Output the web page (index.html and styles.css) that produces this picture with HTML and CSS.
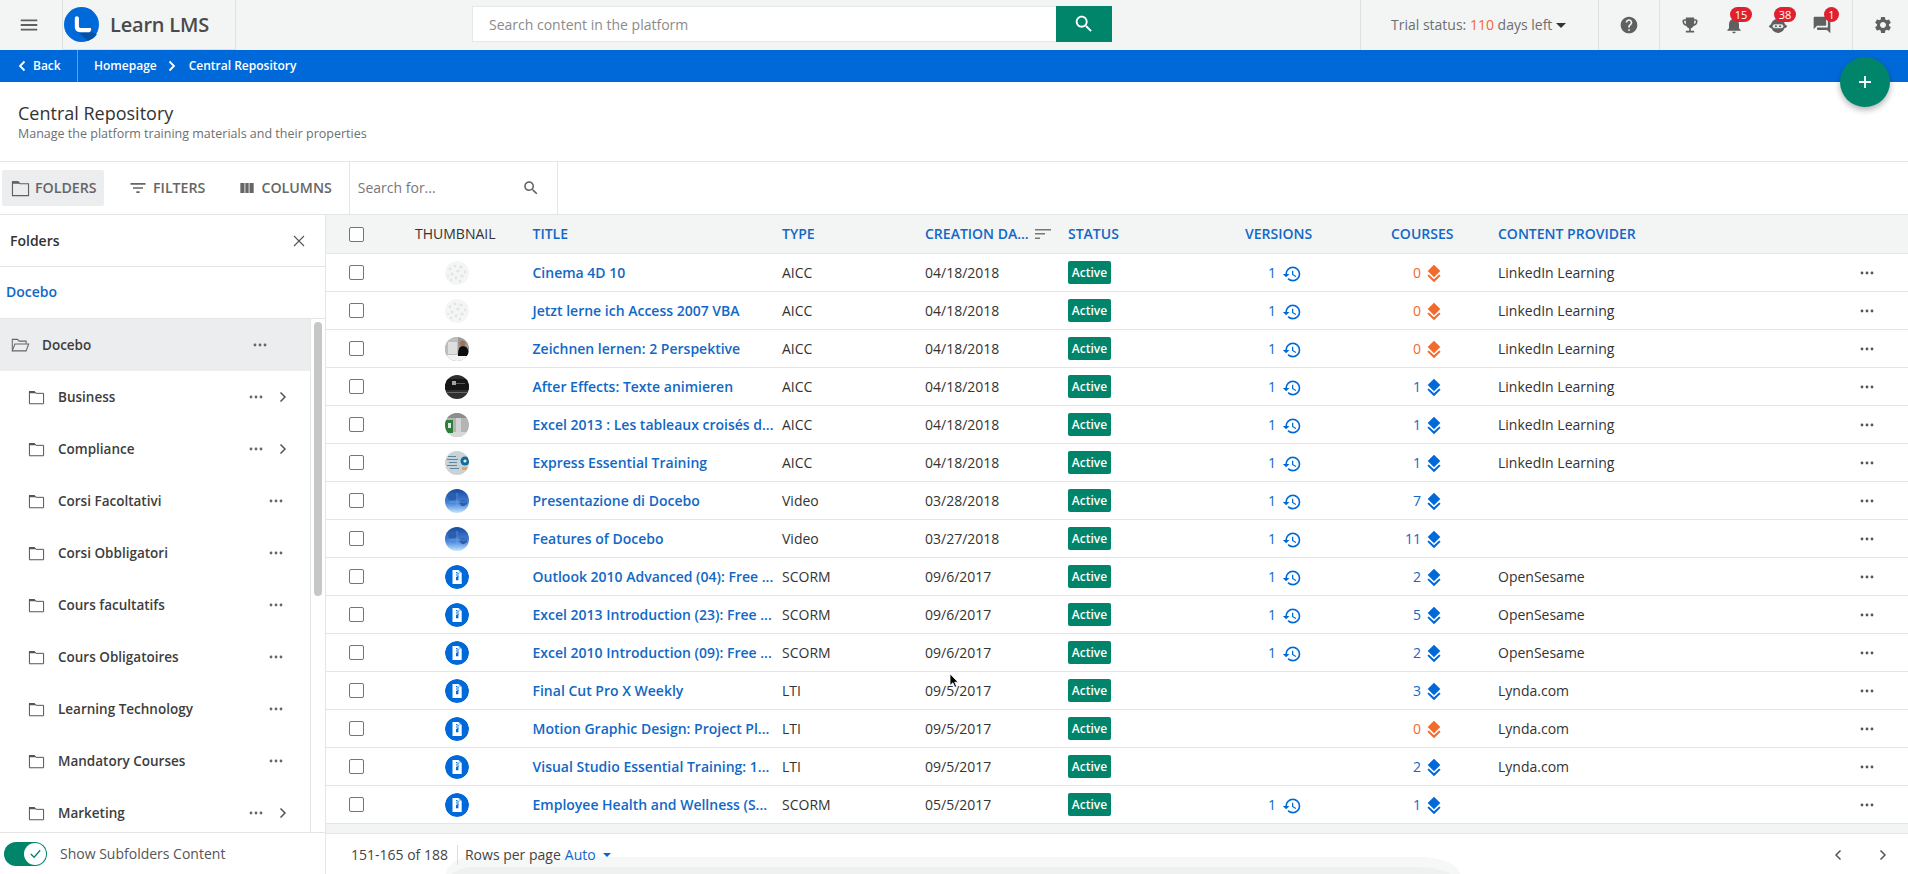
FILE: index.html
```html
<!DOCTYPE html>
<html lang="en">
<head>
<meta charset="utf-8">
<title>Central Repository - Learn LMS</title>
<link rel="stylesheet" href="styles.css">
</head>
<body>
<svg class="defs" aria-hidden="true">
  <symbol id="i-menu" viewBox="0 0 24 24"><path d="M3 18h18v-2H3v2zm0-5h18v-2H3v2zm0-7v2h18V6H3z"/></symbol>
  <symbol id="i-search" viewBox="0 0 24 24"><path d="M15.5 14h-.79l-.28-.27C15.41 12.59 16 11.11 16 9.5 16 5.91 13.09 3 9.5 3S3 5.91 3 9.5 5.91 16 9.5 16c1.61 0 3.09-.59 4.23-1.57l.27.28v.79l5 4.99L20.49 19l-4.99-5zm-6 0C7.01 14 5 11.99 5 9.5S7.01 5 9.5 5 14 7.01 14 9.5 11.99 14 9.5 14z"/></symbol>
  <symbol id="i-help" viewBox="0 0 24 24"><path d="M12 2C6.48 2 2 6.48 2 12s4.48 10 10 10 10-4.48 10-10S17.52 2 12 2zm1 17h-2v-2h2v2zm2.07-7.75l-.9.92C13.45 12.9 13 13.5 13 15h-2v-.5c0-1.1.45-2.1 1.17-2.83l1.24-1.26c.37-.36.59-.86.59-1.41 0-1.1-.9-2-2-2s-2 .9-2 2H8c0-2.21 1.79-4 4-4s4 1.79 4 4c0 .88-.36 1.68-.93 2.25z"/></symbol>
  <symbol id="i-trophy" viewBox="0 0 24 24"><path d="M19 5h-2V3H7v2H5c-1.1 0-2 .9-2 2v1c0 2.55 1.92 4.63 4.39 4.94.63 1.5 1.98 2.63 3.61 2.96V19H7v2h10v-2h-4v-3.1c1.63-.33 2.98-1.46 3.61-2.96C19.08 12.63 21 10.55 21 8V7c0-1.1-.9-2-2-2zM5 8V7h2v3.82C5.84 10.4 5 9.3 5 8zm14 0c0 1.3-.84 2.4-2 2.82V7h2v1z"/></symbol>
  <symbol id="i-bell" viewBox="0 0 24 24"><path d="M12 22c1.1 0 2-.9 2-2h-4c0 1.1.89 2 2 2zm6-6v-5c0-3.07-1.64-5.64-4.5-6.32V4c0-.83-.67-1.5-1.5-1.5s-1.5.67-1.5 1.5v.68C7.63 5.36 6 7.92 6 11v5l-2 2v1h16v-1l-2-2z"/></symbol>
  <symbol id="i-robot" viewBox="0 0 24 24"><circle cx="12" cy="13" r="8.500"/><rect x="1.500" y="11.500" width="21" height="4" rx="2"/><rect x="5.500" y="11" width="13" height="5" rx="2.500" fill="#e4e5e5"/><circle cx="9.500" cy="13.500" r="1.200"/><circle cx="14.500" cy="13.500" r="1.200"/></symbol>
  <symbol id="i-forum" viewBox="0 0 24 24"><path d="M21 6h-2v9H6v2c0 .55.45 1 1 1h11l4 4V7c0-.55-.45-1-1-1zm-4 6V3c0-.55-.45-1-1-1H3c-.55 0-1 .45-1 1v14l4-4h10c.55 0 1-.45 1-1z"/></symbol>
  <symbol id="i-gear" viewBox="0 0 24 24"><path d="M19.14 12.94c.04-.3.06-.61.06-.94 0-.32-.02-.64-.07-.94l2.03-1.58a.49.49 0 0 0 .12-.61l-1.92-3.32a.488.488 0 0 0-.59-.22l-2.39.96c-.5-.38-1.03-.7-1.62-.94l-.36-2.54a.484.484 0 0 0-.48-.41h-3.84c-.24 0-.43.17-.47.41l-.36 2.54c-.59.24-1.13.57-1.62.94l-2.39-.96c-.22-.08-.47 0-.59.22L2.74 8.87c-.12.21-.08.47.12.61l2.03 1.58c-.05.3-.09.63-.09.94s.02.64.07.94l-2.03 1.58a.49.49 0 0 0-.12.61l1.92 3.32c.12.22.37.29.59.22l2.39-.96c.5.38 1.03.7 1.62.94l.36 2.54c.05.24.24.41.48.41h3.84c.24 0 .44-.17.47-.41l.36-2.54c.59-.24 1.13-.56 1.62-.94l2.39.96c.22.08.47 0 .59-.22l1.92-3.32c.12-.22.07-.47-.12-.61l-2.01-1.58zM12 15.6c-1.98 0-3.6-1.62-3.6-3.6s1.62-3.6 3.6-3.6 3.6 1.62 3.6 3.6-1.62 3.6-3.6 3.6z"/></symbol>
  <symbol id="i-history" viewBox="0 0 24 24"><path d="M13 3a9 9 0 0 0-9 9H1l3.89 3.89.07.14L9 12H6c0-3.87 3.13-7 7-7s7 3.13 7 7-3.13 7-7 7c-1.93 0-3.68-.79-4.94-2.06l-1.42 1.42A8.954 8.954 0 0 0 13 21a9 9 0 0 0 0-18zm-1 5v5l4.28 2.54.72-1.21-3.5-2.08V8H12z"/></symbol>
  <symbol id="i-layers" viewBox="0 0 24 24"><path d="M12 1l8 7.800L12 16.600 4 8.800z"/><path d="M12 19.200l-6.600-6-1.700 1.600L12 23l8.300-8.200-1.700-1.600z"/></symbol>
  <symbol id="i-filter" viewBox="0 0 24 24"><path d="M10 18h4v-2h-4v2zM3 6v2h18V6H3zm3 7h12v-2H6v2z"/></symbol>
  <symbol id="i-sort" viewBox="0 0 16 12"><path d="M0 1h16v1.500H0zM0 5h10v1.500H0zM0 9.500h5V11H0z"/></symbol>
  <symbol id="i-columns" viewBox="0 0 24 24"><path d="M10 18h4V6h-4v12zm-6 0h5V6H4v12zM15 6v12h5V6h-5z"/></symbol>
  <symbol id="i-folder" viewBox="0 0 20 18"><path d="M1.500 2h6l2 2h9v12.500h-17z" fill="none" stroke="currentColor" stroke-width="1.200"/><path d="M1 1.200h6.400L9.600 4H1z"/></symbol>
  <symbol id="i-folder-open" viewBox="0 0 22 18"><path d="M1.500 15.500V2.500h6l2 2h8v3" fill="none" stroke="currentColor" stroke-width="1.200"/><path d="M1.500 15.800l3-8h16l-3 8z" fill="none" stroke="currentColor" stroke-width="1.200"/></symbol>
  <symbol id="i-more" viewBox="0 0 14 4"><circle cx="2" cy="2" r="1.400"/><circle cx="7" cy="2" r="1.400"/><circle cx="12" cy="2" r="1.400"/></symbol>
  <symbol id="t-noise" viewBox="0 0 24 24"><rect width="24" height="24" fill="#f4f5f5"/><g fill="#e2e4e4"><circle cx="5" cy="8" r="1.400"/><circle cx="10" cy="5" r="1.300"/><circle cx="16" cy="6" r="1.500"/><circle cx="20" cy="11" r="1.300"/><circle cx="13" cy="10" r="1.600"/><circle cx="7" cy="13" r="1.500"/><circle cx="3" cy="15" r="1.100"/><circle cx="17" cy="15" r="1.600"/><circle cx="11" cy="17" r="1.400"/><circle cx="6" cy="19" r="1.200"/><circle cx="15" cy="20" r="1.200"/></g></symbol>
  <symbol id="t-person" viewBox="0 0 24 24"><rect width="24" height="24" fill="#9a9a9a"/><rect x="0" y="0" width="13" height="24" fill="#bdbdbd"/><rect x="3" y="5" width="9" height="12" fill="#dedede"/><rect y="18" width="24" height="6" fill="#f2f2f2"/><path d="M13 19c0-6 1-10 5-10s6 4 6 10z" fill="#0c0c0c"/><circle cx="17.500" cy="6.500" r="2.800" fill="#a5705a"/></symbol>
  <symbol id="t-dark" viewBox="0 0 24 24"><rect width="24" height="24" fill="#2f2f2f"/><rect x="0" y="4" width="24" height="11" fill="#161616"/><rect x="7" y="6" width="4" height="4" fill="#a5a5a5"/><rect x="11" y="8" width="9" height="1" fill="#5a5a5a"/><rect y="17" width="24" height="1" fill="#696969"/></symbol>
  <symbol id="t-excel" viewBox="0 0 24 24"><rect width="24" height="24" fill="#b4b4b4"/><rect y="0" width="24" height="5" fill="#8d8d8d"/><rect y="19" width="24" height="5" fill="#d8d8d8"/><rect x="0" y="7" width="8" height="13" fill="#2f7d3b"/><rect x="3" y="10" width="3" height="5" fill="#e6e6e6"/><rect x="11" y="5" width="5" height="14" fill="#d4d4d4"/></symbol>
  <symbol id="t-code" viewBox="0 0 24 24"><rect width="24" height="24" fill="#c9d2d6"/><g fill="#5c86a8"><rect x="3" y="5" width="8" height="1"/><rect x="2" y="8" width="11" height="1"/><rect x="4" y="11" width="8" height="1"/><rect x="2" y="14" width="10" height="1"/><rect x="5" y="17" width="9" height="1"/></g><circle cx="20" cy="10" r="4.500" fill="#0f6d9a"/><circle cx="20" cy="10" r="1.600" fill="#e8eef0"/><rect x="17" y="16" width="5" height="3" fill="#e2a65c"/></symbol>
  <symbol id="t-globe" viewBox="0 0 24 24"><defs><linearGradient id="g-globe" x1="0" y1="0" x2="0" y2="1"><stop offset="0" stop-color="#164a9c"/><stop offset=".6" stop-color="#4a86dc"/><stop offset="1" stop-color="#c6e8ff"/></linearGradient></defs><rect width="24" height="24" fill="url(#g-globe)"/><path d="M3 8c3-3 7-3 9-1s-1 4-4 4-4 2-5-3zM15 12c3-2 6-1 7 1s-3 5-5 4-3-3-2-5z" fill="#2a5fb0"/><path d="M12 4v18M4 13h17" stroke="#8ab4ea" stroke-width=".5" fill="none"/></symbol>
  <symbol id="t-zip" viewBox="0 0 24 24"><circle cx="12" cy="12" r="12" fill="#0069d9"/><path d="M7.500 5h6.200l3 3v11h-9.200z" fill="#fff"/><path d="M13.500 5v3.200h3.200z" fill="#a9ccf2"/><path d="M11 7h1.400v1.200H11zm1.400 1.200h1.400v1.200h-1.400zM11 9.400h1.400v1.200H11zm1.400 1.200h1.400v1.200h-1.400zM11 11.800h2.400v3.400H11z" fill="#0069d9"/></symbol>
</svg>

<div class="app">
  <header class="topbar">
    <button class="menu-btn" aria-label="Menu"><svg class="ic-22"><use href="#i-menu"/></svg></button>
    <div class="brand">
      <svg class="logo" viewBox="0 0 34 34" aria-hidden="true">
        <circle cx="17" cy="17" r="17" fill="#0069d9"/>
        <path d="M14 24.500h12.500L32 26.500A17 17 0 0 1 23 33z" fill="#0352a8"/>
        <path d="M10.500 11c0-1.200.9-2 2-2s2 .8 2 2v7.500c0 1.200.8 2 2 2H24c1.300 0 2.400-.6 2.400 1 0 1.900-1 3-3 3h-7.900c-3 0-5-2-5-5z" fill="#fff"/>
      </svg>
      <span class="brand-name">Learn LMS</span>
    </div>
    <div class="global-search">
      <input class="global-input" type="text" placeholder="Search content in the platform">
      <button class="global-btn" aria-label="Search"><svg class="ic-22"><use href="#i-search"/></svg></button>
    </div>
    <div class="trial"><span>Trial status: <span class="trial-days">110</span> days left</span><i class="caret"></i></div>
    <div class="tb-cell tb-help"><svg class="ic-20"><use href="#i-help"/></svg></div>
    <div class="tb-cell tb-notif">
      <span class="nb"><svg class="ic-20"><use href="#i-trophy"/></svg></span>
      <span class="nb"><svg class="ic-20"><use href="#i-bell"/></svg><b class="count">15</b></span>
      <span class="nb"><svg class="ic-20"><use href="#i-robot"/></svg><b class="count">38</b></span>
      <span class="nb"><svg class="ic-20"><use href="#i-forum"/></svg><b class="count count-one">1</b></span>
    </div>
    <div class="tb-cell tb-gear"><svg class="ic-20"><use href="#i-gear"/></svg></div>
  </header>

  <nav class="crumbs">
    <a class="back"><svg class="chev-w" viewBox="0 0 8 12"><path d="M6.500 1.500L2 6l4.500 4.500"/></svg>Back</a>
    <a class="crumb">Homepage</a>
    <svg class="chev-w chev-sep" viewBox="0 0 8 12"><path d="M1.500 1.500L6 6l-4.500 4.500"/></svg>
    <span class="crumb">Central Repository</span>
  </nav>

  <section class="pagehead">
    <h1>Central Repository</h1>
    <p>Manage the platform training materials and their properties</p>
  </section>

  <section class="toolbar">
    <button class="tool tool-on"><svg class="ic-folder"><use href="#i-folder"/></svg>FOLDERS</button>
    <button class="tool tool-filter"><svg class="ic-20"><use href="#i-filter"/></svg>FILTERS</button>
    <button class="tool tool-col"><svg class="ic-20"><use href="#i-columns"/></svg>COLUMNS</button>
    <div class="tool-search"><input type="text" placeholder="Search for..."><svg class="ic-18"><use href="#i-search"/></svg></div>
  </section>

  <main class="content">
    <aside class="side">
      <div class="side-head"><span>Folders</span>
        <svg class="side-x" viewBox="0 0 12 12"><path d="M1 1l10 10M11 1L1 11"/></svg></div>
      <div class="side-crumb">Docebo</div>
      <div class="side-body">
        <div class="side-list">
          <div class="folder folder-root"><svg class="f-open"><use href="#i-folder-open"/></svg><span class="f-name">Docebo</span><svg class="dots"><use href="#i-more"/></svg></div>
          <div class="folder"><svg class="f-ic"><use href="#i-folder"/></svg><span class="f-name">Business</span><svg class="dots"><use href="#i-more"/></svg><svg class="chev-g" viewBox="0 0 8 12"><path d="M1.500 1.500L6 6l-4.500 4.500"/></svg></div>
          <div class="folder"><svg class="f-ic"><use href="#i-folder"/></svg><span class="f-name">Compliance</span><svg class="dots"><use href="#i-more"/></svg><svg class="chev-g" viewBox="0 0 8 12"><path d="M1.500 1.500L6 6l-4.500 4.500"/></svg></div>
          <div class="folder folder-plain"><svg class="f-ic"><use href="#i-folder"/></svg><span class="f-name">Corsi Facoltativi</span><svg class="dots"><use href="#i-more"/></svg></div>
          <div class="folder folder-plain"><svg class="f-ic"><use href="#i-folder"/></svg><span class="f-name">Corsi Obbligatori</span><svg class="dots"><use href="#i-more"/></svg></div>
          <div class="folder folder-plain"><svg class="f-ic"><use href="#i-folder"/></svg><span class="f-name">Cours facultatifs</span><svg class="dots"><use href="#i-more"/></svg></div>
          <div class="folder folder-plain"><svg class="f-ic"><use href="#i-folder"/></svg><span class="f-name">Cours Obligatoires</span><svg class="dots"><use href="#i-more"/></svg></div>
          <div class="folder folder-plain"><svg class="f-ic"><use href="#i-folder"/></svg><span class="f-name">Learning Technology</span><svg class="dots"><use href="#i-more"/></svg></div>
          <div class="folder folder-plain"><svg class="f-ic"><use href="#i-folder"/></svg><span class="f-name">Mandatory Courses</span><svg class="dots"><use href="#i-more"/></svg></div>
          <div class="folder"><svg class="f-ic"><use href="#i-folder"/></svg><span class="f-name">Marketing</span><svg class="dots"><use href="#i-more"/></svg><svg class="chev-g" viewBox="0 0 8 12"><path d="M1.500 1.500L6 6l-4.500 4.500"/></svg></div>
        </div>
        <div class="side-track"><div class="side-thumb"></div></div>
      </div>
      <div class="side-foot">
        <span class="toggle"><span class="knob"><svg viewBox="0 0 16 16"><path d="M3 8.500l3.500 3.500L13 4.500"/></svg></span></span>
        <span class="side-foot-label">Show Subfolders Content</span>
      </div>
    </aside>

    <section class="grid">
      <div class="row row-head">
        <span class="c-check"><i class="box"></i></span>
        <span class="h-plain">THUMBNAIL</span>
        <span>TITLE</span>
        <span>TYPE</span>
        <span class="h-sort">CREATION DA...<svg class="sort"><use href="#i-sort"/></svg></span>
        <span>STATUS</span>
        <span>VERSIONS</span>
        <span>COURSES</span>
        <span>CONTENT PROVIDER</span>
        <span></span>
      </div>

      <div class="row"><span class="c-check"><i class="box"></i></span><span class="c-thumb"><svg><use href="#t-noise"/></svg></span><a class="c-title">Cinema 4D 10</a><span>AICC</span><span>04/18/2018</span><span class="c-status"><b class="active">Active</b></span><span class="c-ver">1<svg><use href="#i-history"/></svg></span><span class="c-crs zero">0<svg><use href="#i-layers"/></svg></span><span>LinkedIn Learning</span><svg class="row-more"><use href="#i-more"/></svg></div>
      <div class="row"><span class="c-check"><i class="box"></i></span><span class="c-thumb"><svg><use href="#t-noise"/></svg></span><a class="c-title">Jetzt lerne ich Access 2007 VBA</a><span>AICC</span><span>04/18/2018</span><span class="c-status"><b class="active">Active</b></span><span class="c-ver">1<svg><use href="#i-history"/></svg></span><span class="c-crs zero">0<svg><use href="#i-layers"/></svg></span><span>LinkedIn Learning</span><svg class="row-more"><use href="#i-more"/></svg></div>
      <div class="row"><span class="c-check"><i class="box"></i></span><span class="c-thumb"><svg><use href="#t-person"/></svg></span><a class="c-title">Zeichnen lernen: 2 Perspektive</a><span>AICC</span><span>04/18/2018</span><span class="c-status"><b class="active">Active</b></span><span class="c-ver">1<svg><use href="#i-history"/></svg></span><span class="c-crs zero">0<svg><use href="#i-layers"/></svg></span><span>LinkedIn Learning</span><svg class="row-more"><use href="#i-more"/></svg></div>
      <div class="row"><span class="c-check"><i class="box"></i></span><span class="c-thumb"><svg><use href="#t-dark"/></svg></span><a class="c-title">After Effects: Texte animieren</a><span>AICC</span><span>04/18/2018</span><span class="c-status"><b class="active">Active</b></span><span class="c-ver">1<svg><use href="#i-history"/></svg></span><span class="c-crs">1<svg><use href="#i-layers"/></svg></span><span>LinkedIn Learning</span><svg class="row-more"><use href="#i-more"/></svg></div>
      <div class="row"><span class="c-check"><i class="box"></i></span><span class="c-thumb"><svg><use href="#t-excel"/></svg></span><a class="c-title">Excel 2013 : Les tableaux croisés d...</a><span>AICC</span><span>04/18/2018</span><span class="c-status"><b class="active">Active</b></span><span class="c-ver">1<svg><use href="#i-history"/></svg></span><span class="c-crs">1<svg><use href="#i-layers"/></svg></span><span>LinkedIn Learning</span><svg class="row-more"><use href="#i-more"/></svg></div>
      <div class="row"><span class="c-check"><i class="box"></i></span><span class="c-thumb"><svg><use href="#t-code"/></svg></span><a class="c-title">Express Essential Training</a><span>AICC</span><span>04/18/2018</span><span class="c-status"><b class="active">Active</b></span><span class="c-ver">1<svg><use href="#i-history"/></svg></span><span class="c-crs">1<svg><use href="#i-layers"/></svg></span><span>LinkedIn Learning</span><svg class="row-more"><use href="#i-more"/></svg></div>
      <div class="row"><span class="c-check"><i class="box"></i></span><span class="c-thumb"><svg><use href="#t-globe"/></svg></span><a class="c-title">Presentazione di Docebo</a><span>Video</span><span>03/28/2018</span><span class="c-status"><b class="active">Active</b></span><span class="c-ver">1<svg><use href="#i-history"/></svg></span><span class="c-crs">7<svg><use href="#i-layers"/></svg></span><span></span><svg class="row-more"><use href="#i-more"/></svg></div>
      <div class="row"><span class="c-check"><i class="box"></i></span><span class="c-thumb"><svg><use href="#t-globe"/></svg></span><a class="c-title">Features of Docebo</a><span>Video</span><span>03/27/2018</span><span class="c-status"><b class="active">Active</b></span><span class="c-ver">1<svg><use href="#i-history"/></svg></span><span class="c-crs">11<svg><use href="#i-layers"/></svg></span><span></span><svg class="row-more"><use href="#i-more"/></svg></div>
      <div class="row"><span class="c-check"><i class="box"></i></span><span class="c-thumb"><svg><use href="#t-zip"/></svg></span><a class="c-title">Outlook 2010 Advanced (04): Free ...</a><span>SCORM</span><span>09/6/2017</span><span class="c-status"><b class="active">Active</b></span><span class="c-ver">1<svg><use href="#i-history"/></svg></span><span class="c-crs">2<svg><use href="#i-layers"/></svg></span><span>OpenSesame</span><svg class="row-more"><use href="#i-more"/></svg></div>
      <div class="row"><span class="c-check"><i class="box"></i></span><span class="c-thumb"><svg><use href="#t-zip"/></svg></span><a class="c-title">Excel 2013 Introduction (23): Free ...</a><span>SCORM</span><span>09/6/2017</span><span class="c-status"><b class="active">Active</b></span><span class="c-ver">1<svg><use href="#i-history"/></svg></span><span class="c-crs">5<svg><use href="#i-layers"/></svg></span><span>OpenSesame</span><svg class="row-more"><use href="#i-more"/></svg></div>
      <div class="row"><span class="c-check"><i class="box"></i></span><span class="c-thumb"><svg><use href="#t-zip"/></svg></span><a class="c-title">Excel 2010 Introduction (09): Free ...</a><span>SCORM</span><span>09/6/2017</span><span class="c-status"><b class="active">Active</b></span><span class="c-ver">1<svg><use href="#i-history"/></svg></span><span class="c-crs">2<svg><use href="#i-layers"/></svg></span><span>OpenSesame</span><svg class="row-more"><use href="#i-more"/></svg></div>
      <div class="row"><span class="c-check"><i class="box"></i></span><span class="c-thumb"><svg><use href="#t-zip"/></svg></span><a class="c-title">Final Cut Pro X Weekly</a><span>LTI</span><span>09/5/2017</span><span class="c-status"><b class="active">Active</b></span><span></span><span class="c-crs">3<svg><use href="#i-layers"/></svg></span><span>Lynda.com</span><svg class="row-more"><use href="#i-more"/></svg></div>
      <div class="row"><span class="c-check"><i class="box"></i></span><span class="c-thumb"><svg><use href="#t-zip"/></svg></span><a class="c-title">Motion Graphic Design: Project Pl...</a><span>LTI</span><span>09/5/2017</span><span class="c-status"><b class="active">Active</b></span><span></span><span class="c-crs zero">0<svg><use href="#i-layers"/></svg></span><span>Lynda.com</span><svg class="row-more"><use href="#i-more"/></svg></div>
      <div class="row"><span class="c-check"><i class="box"></i></span><span class="c-thumb"><svg><use href="#t-zip"/></svg></span><a class="c-title">Visual Studio Essential Training: 1...</a><span>LTI</span><span>09/5/2017</span><span class="c-status"><b class="active">Active</b></span><span></span><span class="c-crs">2<svg><use href="#i-layers"/></svg></span><span>Lynda.com</span><svg class="row-more"><use href="#i-more"/></svg></div>
      <div class="row"><span class="c-check"><i class="box"></i></span><span class="c-thumb"><svg><use href="#t-zip"/></svg></span><a class="c-title">Employee Health and Wellness (S...</a><span>SCORM</span><span>05/5/2017</span><span class="c-status"><b class="active">Active</b></span><span class="c-ver">1<svg><use href="#i-history"/></svg></span><span class="c-crs">1<svg><use href="#i-layers"/></svg></span><span></span><svg class="row-more"><use href="#i-more"/></svg></div>

      <div class="grid-strip"></div>
      <footer class="pager">
        <div class="ghost"></div>
        <span class="range">151-165 of 188</span>
        <span class="rpp">Rows per page</span>
        <span class="auto">Auto</span><i class="caret caret-blue"></i>
        <span class="pager-nav">
          <svg class="chev-g" viewBox="0 0 8 12"><path d="M6.500 1.500L2 6l4.500 4.500"/></svg>
          <svg class="chev-g" viewBox="0 0 8 12"><path d="M1.500 1.500L6 6l-4.500 4.500"/></svg>
        </span>
      </footer>
    </section>
  </main>
</div>

<button class="fab" aria-label="Add"><svg viewBox="0 0 14 14"><path d="M7 1v12M1 7h12"/></svg></button>
<svg class="cursor" viewBox="0 0 12 18" aria-hidden="true"><path d="M1 1v13l3.200-3 2.200 5 2-.9-2.200-4.800H10z" fill="#000" stroke="#fff" stroke-width=".8"/></svg>
</body>
</html>
```

FILE: styles.css
```css
* { box-sizing: border-box; }
html, body { margin: 0; height: 100%; overflow: hidden; }
body { font: 400 14px/1.2 "Open Sans", "Liberation Sans", sans-serif; color: #333; background: #fff; }
button { font: inherit; border: 0; background: none; padding: 0; color: inherit; }
input { font: inherit; border: 0; outline: 0; background: transparent; padding: 0; }
svg { fill: currentColor; flex: none; display: block; }
.defs { position: absolute; width: 0; height: 0; overflow: hidden; }
.ic-22 { width: 22px; height: 22px; }
.ic-20 { width: 20px; height: 20px; }
.ic-18 { width: 18px; height: 18px; }

.app { display: flex; flex-direction: column; height: 874px; }

/* top bar */
.topbar { display: flex; align-items: stretch; height: 50px; background: #f3f4f4; color: #5f6060; }
.menu-btn { width: 62px; display: flex; align-items: center; justify-content: center; padding-right: 5px; }
.brand { width: 174px; display: flex; align-items: center; gap: 11px; border: solid #dfe1e1; border-width: 0 1px 1px; padding-left: 1px; }
.logo { width: 35px; height: 35px; }
.brand-name { font-size: 20px; font-weight: 600; color: #4a4a4a; letter-spacing: -.2px; }
.global-search { display: flex; margin: 6px 0 8px 236px; width: 640px; }
.global-input { width: 584px; background: #fff; border: 1px solid #e6e7e7; border-right: 0; padding: 2px 0 0 16px; font-size: 14px; }
.global-input::placeholder { color: #8a8b8b; opacity: 1; }
.global-btn { width: 56px; background: #00856a; color: #fff; display: flex; align-items: center; justify-content: center; }
.trial { margin-left: 248px; width: 238px; border-left: 1px solid #dfe1e1; padding-left: 30px; display: flex; align-items: center; gap: 4px; font-size: 14px; color: #6e6f6f; white-space: nowrap; }
.trial-days { color: #f26a2c; }
.caret { display: inline-block; width: 0; height: 0; border: solid transparent; border-width: 5px 5px 0; border-top-color: #333; }
.tb-cell { display: flex; align-items: center; border-left: 1px solid #dfe1e1; }
.tb-help { width: 61px; justify-content: center; }
.tb-notif { width: 193px; padding-left: 8px; }
.tb-gear { width: 56px; padding-left: 20px; }
.nb { position: relative; width: 44px; display: flex; justify-content: center; }
.count { position: absolute; top: -8px; left: 18px; min-width: 22px; height: 15px; border-radius: 8px; background: #e0202f; color: #fff; font: 400 11px/15px "Open Sans", sans-serif; text-align: center; }
.count-one { left: 24px; min-width: 15px; }

/* breadcrumb */
.crumbs { display: flex; align-items: center; height: 32px; background: #0069d9; color: #fff; font-size: 12px; font-weight: 600; }
.back { width: 78px; height: 100%; display: flex; align-items: center; padding-left: 18px; gap: 7px; border-right: 1px solid #5aa0ea; }
.crumb { white-space: nowrap; }
.crumbs .back + .crumb { margin-left: 16px; }
.chev-w { width: 8px; height: 12px; fill: none; stroke: #fff; stroke-width: 1.800; }
.chev-sep { margin: 0 13px 0 11px; }

/* page head */
.pagehead { height: 79px; padding: 19px 18px 0; }
.pagehead h1 { margin: 0; font-size: 18px; font-weight: 500; line-height: 24px; color: #333; }
.pagehead p { margin: 0; font-size: 12.500px; line-height: 17px; color: #6e6f6f; }

/* toolbar */
.toolbar { display: flex; align-items: center; height: 54px; border: solid #e4e6e5; border-width: 1px 0; color: #5f6060; }
.tool { height: 36px; display: flex; align-items: center; gap: 5px; font-size: 14.200px; font-weight: 600; color: #666; }
.tool-on { width: 102px; margin-left: 2px; padding-left: 9px; gap: 5px; background: #ecedee; border-radius: 2px; }
.ic-folder { width: 19px; height: 17px; color: #5f6060; }
.tool-filter { margin-left: 24px; }
.tool-col { margin-left: 32px; gap: 4px; }
.tool-col svg, .tool-filter svg { width: 20px; height: 20px; }
.tool-search { margin-left: 17px; width: 209px; height: 100%; display: flex; align-items: center; padding: 0 17px 0 8px; border: solid #e4e6e5; border-width: 0 1px; }
.tool-search input { flex: 1; min-width: 0; font-size: 14px; }
.tool-search input::placeholder { color: #777; opacity: 1; }

/* content */
.content { flex: 1; min-height: 0; display: flex; }
.side { width: 326px; flex: none; display: flex; flex-direction: column; border-right: 1px solid #e4e6e5; }
.side-head { height: 52px; display: flex; align-items: center; justify-content: space-between; padding: 1px 20px 0 10px; border-bottom: 1px solid #e4e6e5; font-weight: 600; color: #333; font-size: 14px; }
.side-x { width: 12px; height: 12px; fill: none; stroke: #555; stroke-width: 1.100; }
.side-crumb { height: 52px; display: flex; align-items: center; padding-left: 6px; border-bottom: 1px solid #e4e6e5; color: #1168c6; font-weight: 600; font-size: 14px; }
.side-body { flex: 1; min-height: 0; display: flex; }
.side-list { width: 311px; flex: none; border-right: 1px solid #e4e6e5; overflow: hidden; }
.side-track { flex: 1; }
.side-thumb { width: 8px; height: 274px; margin: 3px 0 0 3px; border-radius: 4px; background: #c6c7c7; }
.folder { height: 52px; display: flex; align-items: center; padding: 0 23px 0 28px; font-weight: 600; color: #3d3d3d; font-size: 13.500px; }
.folder-root { background: #ecedee; padding: 0 43px 0 11px; }
.folder-plain { padding-right: 27px; }
.f-ic { width: 17px; height: 15px; color: #555; margin-right: 13px; }
.f-open { width: 19px; height: 16px; color: #666; margin-right: 12px; }
.f-name { flex: 1; white-space: nowrap; }
.dots { width: 14px; height: 4px; color: #666; }
.chev-g { width: 8px; height: 12px; fill: none; stroke: #555; stroke-width: 1.500; }
.folder .chev-g { margin-left: 16px; }
.side-foot { height: 42px; display: flex; align-items: center; gap: 13px; padding-left: 4px; border-top: 1px solid #e4e6e5; font-size: 14px; color: #555; }
.side-foot-label { padding-top: 2px; }
.toggle { width: 43px; height: 24px; border-radius: 12px; background: #00856a; padding: 1px; display: flex; justify-content: flex-end; }
.knob { width: 22px; height: 22px; border-radius: 50%; background: #fff; display: flex; align-items: center; justify-content: center; }
.knob svg { width: 15px; height: 15px; fill: none; stroke: #00856a; stroke-width: 1.400; }

/* table */
.grid { flex: 1; min-width: 0; display: flex; flex-direction: column; }
.row { display: grid; grid-template-columns: 89px 117.500px 249.500px 143px 143px 177px 146px 107px 352px 58px; align-items: center; height: 38px; border-bottom: 1px solid #e4e6e5; white-space: nowrap; font-size: 14px; color: #333; }
.row > a, .row > span:not(.c-check):not(.c-thumb):not(.c-status) { padding-top: 2px; }
.row-head { height: 39px; background: #f3f4f4; color: #1168c6; font-size: 14px; font-weight: 600; }
.row-head > span:not(.c-check):not(.c-thumb):not(.c-status) { padding-top: 0; }
.h-plain { color: #333; font-weight: 400; }
.h-sort { display: flex; align-items: center; gap: 6px; }
.sort { width: 16px; height: 12px; color: #777; }
.c-check { padding-left: 23px; }
.box { display: block; width: 15px; height: 15px; border: 1.500px solid #757575; border-radius: 2px; background: #fff; }
.c-thumb { padding-left: 30px; }
.c-thumb svg { width: 24px; height: 24px; border-radius: 50%; }
.c-title { color: #1168c6; font-weight: 600; }
.active { display: block; height: 23px; width: 43px; text-align: center; border-radius: 2px; background: #00856a; color: #fff; font: 600 12px/23px "Open Sans", sans-serif; }
.c-ver, .c-crs { display: flex; align-items: center; justify-content: flex-end; color: #1168c6; font-weight: 500; }
.c-ver { padding-right: 89px; gap: 6px; }
.c-crs { padding-right: 54px; gap: 3px; }
.c-ver svg { width: 20px; height: 20px; color: #0069d9; }
.c-crs svg { width: 20px; height: 19px; color: #0069d9; }
.zero, .c-crs.zero svg { color: #f26a2c; }
.row-more { width: 14px; height: 4px; margin-left: 10px; color: #555; }
.grid-strip { flex: 1; background: #f3f4f4; }
.pager { position: relative; height: 41px; flex: none; display: flex; align-items: center; border-top: 1px solid #e4e6e5; padding: 2px 0 0 25px; font-size: 14px; color: #444; overflow: hidden; }
.pager > span, .pager > i { position: relative; }
.ghost { position: absolute; left: 120px; top: 23px; width: 1014px; height: 60px; background: #eff0f0; border-radius: 28px 44px 0 0 / 18px 18px 0 0; box-shadow: inset 0 10px 0 #f6f7f7; }
.range { padding-right: 9px; border-right: 1px solid #dcdddd; line-height: 20px; }
.rpp { margin-left: 7px; }
.auto { margin-left: 4px; color: #1168c6; font-weight: 500; }
.caret-blue { border-top-color: #0069d9; border-width: 4px 4px 0; margin-left: 7px; }
.pager-nav { margin-left: auto; margin-right: 21px; display: flex; gap: 37px; }

.fab { position: absolute; top: 57px; left: 1840px; width: 50px; height: 50px; border-radius: 50%; background: #00856a; box-shadow: 0 3px 6px rgba(0,0,0,.3); display: flex; align-items: center; justify-content: center; }
.fab svg { width: 14px; height: 14px; fill: none; stroke: #fff; stroke-width: 1.800; }
.cursor { position: absolute; left: 949px; top: 673px; width: 11px; height: 16px; }
```
